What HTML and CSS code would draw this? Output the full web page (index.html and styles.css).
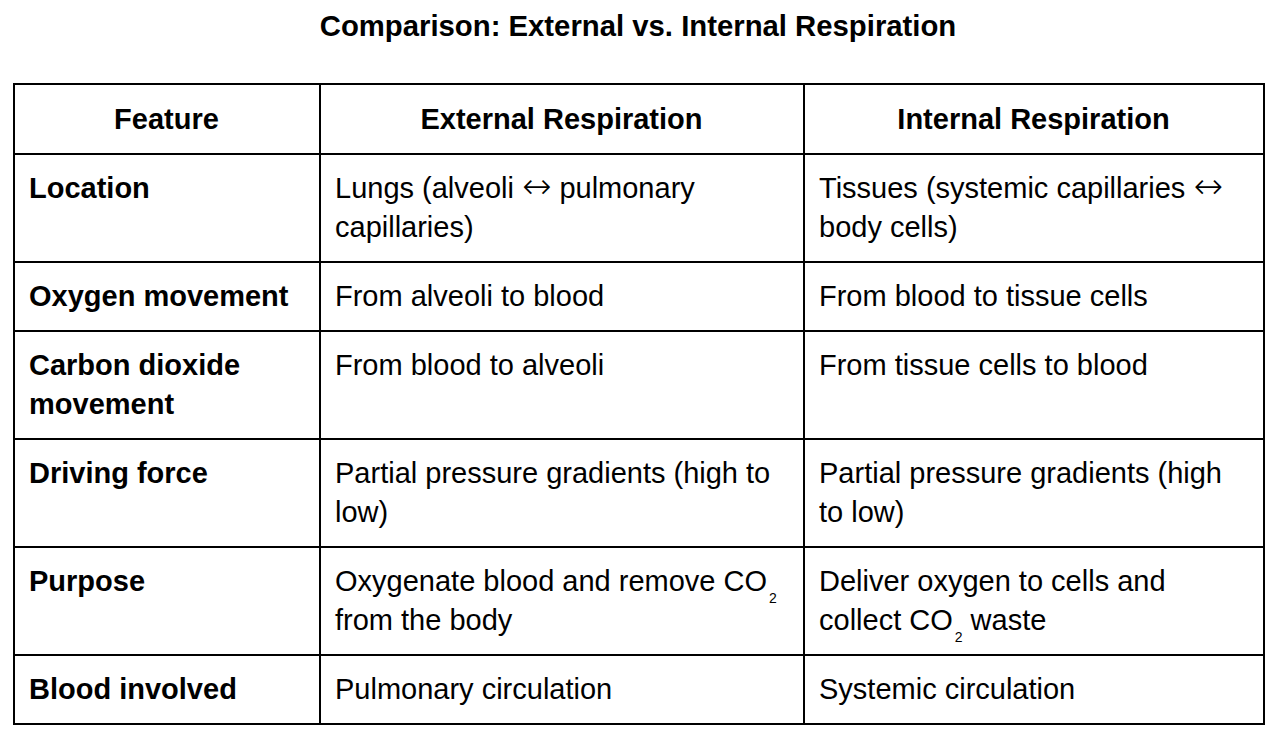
FILE: index.html
```html
<!DOCTYPE html>
<html lang="en">
<head>
<meta charset="utf-8">
<title>Comparison: External vs. Internal Respiration</title>
<link rel="stylesheet" href="styles.css">
</head>
<body>
<h1 class="title">Comparison: External vs. Internal Respiration</h1>
<table class="cmp">
  <colgroup>
    <col class="c1">
    <col class="c2">
    <col class="c3">
  </colgroup>
  <thead>
    <tr><th>Feature</th><th>External Respiration</th><th>Internal Respiration</th></tr>
  </thead>
  <tbody>
    <tr><td class="lbl">Location</td><td>Lungs (alveoli <span class="arr">↔</span> pulmonary capillaries)</td><td>Tissues (systemic capillaries <span class="arr">↔</span> body cells)</td></tr>
    <tr><td class="lbl">Oxygen movement</td><td>From alveoli to blood</td><td>From blood to tissue cells</td></tr>
    <tr><td class="lbl">Carbon dioxide movement</td><td>From blood to alveoli</td><td>From tissue cells to blood</td></tr>
    <tr><td class="lbl">Driving force</td><td>Partial pressure gradients (high to low)</td><td>Partial pressure gradients (high to low)</td></tr>
    <tr><td class="lbl">Purpose</td><td>Oxygenate blood and remove CO<sub>2</sub> from the body</td><td>Deliver oxygen to cells and collect CO<sub>2</sub> waste</td></tr>
    <tr><td class="lbl">Blood involved</td><td>Pulmonary circulation</td><td>Systemic circulation</td></tr>
  </tbody>
</table>
</body>
</html>
```

FILE: styles.css
```css
html, body {
  margin: 0;
  padding: 0;
  background: #ffffff;
}
body {
  font-family: "Liberation Sans", Arial, sans-serif;
  color: #000000;
  padding: 0 13px;
}
.title {
  margin: 0;
  padding-top: 6px;
  height: 83px;
  box-sizing: border-box;
  text-align: center;
  font-size: 29.3px;
  line-height: 40px;
  font-weight: 700;
}
.cmp {
  width: 1250px;
  border-collapse: collapse;
  table-layout: fixed;
  font-size: 29px;
  line-height: 39px;
}
.c1 { width: 306px; }
.c2 { width: 484px; }
.c3 { width: 460px; }
.cmp th, .cmp td {
  border: 2px solid #000000;
  padding: 14px 15px 14px 14px;
  vertical-align: top;
  text-align: left;
}
.cmp th {
  text-align: center;
  font-weight: 700;
  padding-top: 15px;
  padding-bottom: 14px;
}
.cmp td.lbl {
  font-weight: 700;
}
.arr {
  font-family: "DejaVu Sans", sans-serif;
  font-weight: 300;
  font-size: 35px;
  line-height: 0;
}
.cmp sub {
  font-size: 14px;
  line-height: 0;
  vertical-align: -12px;
  margin-left: 2px;
}
```
